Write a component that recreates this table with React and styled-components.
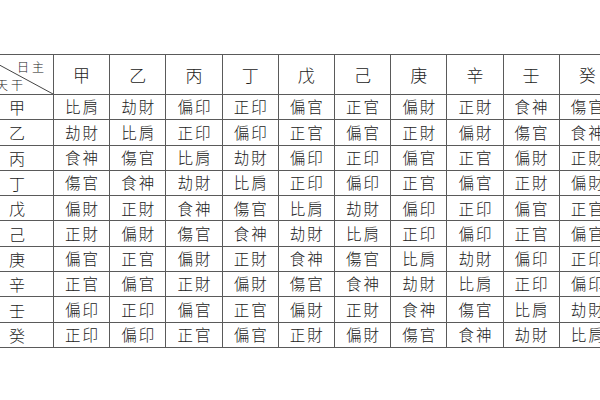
import React from 'react';
import styled, { createGlobalStyle } from 'styled-components';

const GlobalStyle = createGlobalStyle`
  html, body {
    margin: 0;
    background: #fff;
  }
  body {
    font-family: "Noto Sans CJK TC", "Noto Sans CJK SC", sans-serif;
    color: #222;
  }
`;

const Page = styled.div`
  width: 600px;
  height: 400px;
  overflow: hidden;
  padding-top: 54px;
  box-sizing: border-box;
`;

const Table = styled.table`
  margin-left: -20px;
  width: 636px;
  border-collapse: collapse;
  table-layout: fixed;

  td, th {
    border: 1px solid #5a5a5a;
    padding: 0;
    text-align: center;
    vertical-align: middle;
    overflow: hidden;
    white-space: nowrap;
  }
`;

const HeadCell = styled.th`
  height: 39px;
  font-size: 17px;
  font-weight: 300;
  line-height: 1;
`;

const Corner = styled.th`
  position: relative;
  height: 39px;
  font-weight: 300;
`;

const CornerInner = styled.div`
  height: 39px;
  display: flex;
  flex-direction: column;
  justify-content: space-between;
  padding: 4px 6px 2px 15px;
  box-sizing: border-box;
  font-size: 12px;
  letter-spacing: 3px;
  line-height: 15px;
`;

const CornerLabel = styled.span`
  align-self: ${p => (p.$end ? 'flex-end' : 'flex-start')};
`;

const Diagonal = styled.svg`
  position: absolute;
  left: 0;
  top: 0;
  width: 100%;
  height: 100%;
`;

const RowHead = styled.td`
  height: 24.3px;
  font-size: 16px;
  font-weight: 300;
  line-height: 1;
`;

const Cell = styled.td`
  height: 24.3px;
  font-size: 15.5px;
  font-weight: 300;
  letter-spacing: 2px;
  text-indent: 2px;
  line-height: 1;
`;

const stems = ['甲', '乙', '丙', '丁', '戊', '己', '庚', '辛', '壬', '癸'];

const rows = [
  ['比肩', '劫財', '偏印', '正印', '偏官', '正官', '偏財', '正財', '食神', '傷官'],
  ['劫財', '比肩', '正印', '偏印', '正官', '偏官', '正財', '偏財', '傷官', '食神'],
  ['食神', '傷官', '比肩', '劫財', '偏印', '正印', '偏官', '正官', '偏財', '正財'],
  ['傷官', '食神', '劫財', '比肩', '正印', '偏印', '正官', '偏官', '正財', '偏財'],
  ['偏財', '正財', '食神', '傷官', '比肩', '劫財', '偏印', '正印', '偏官', '正官'],
  ['正財', '偏財', '傷官', '食神', '劫財', '比肩', '正印', '偏印', '正官', '偏官'],
  ['偏官', '正官', '偏財', '正財', '食神', '傷官', '比肩', '劫財', '偏印', '正印'],
  ['正官', '偏官', '正財', '偏財', '傷官', '食神', '劫財', '比肩', '正印', '偏印'],
  ['偏印', '正印', '偏官', '正官', '偏財', '正財', '食神', '傷官', '比肩', '劫財'],
  ['正印', '偏印', '正官', '偏官', '正財', '偏財', '傷官', '食神', '劫財', '比肩'],
];

export default function App() {
  return (
    <Page>
      <GlobalStyle />
      <Table>
        <colgroup>
          <col style={{ width: 73 }} />
          {stems.map(s => <col key={s} />)}
        </colgroup>
        <thead>
          <tr>
            <Corner>
              <Diagonal viewBox="0 0 100 100" preserveAspectRatio="none">
                <line x1="0" y1="0" x2="100" y2="100" stroke="#444" strokeWidth="1" vectorEffect="non-scaling-stroke" />
              </Diagonal>
              <CornerInner>
                <CornerLabel $end>日主</CornerLabel>
                <CornerLabel>天干</CornerLabel>
              </CornerInner>
            </Corner>
            {stems.map(s => <HeadCell key={s}>{s}</HeadCell>)}
          </tr>
        </thead>
        <tbody>
          {rows.map((row, i) => (
            <tr key={stems[i]}>
              <RowHead>{stems[i]}</RowHead>
              {row.map((v, j) => <Cell key={j}>{v}</Cell>)}
            </tr>
          ))}
        </tbody>
      </Table>
    </Page>
  );
}
